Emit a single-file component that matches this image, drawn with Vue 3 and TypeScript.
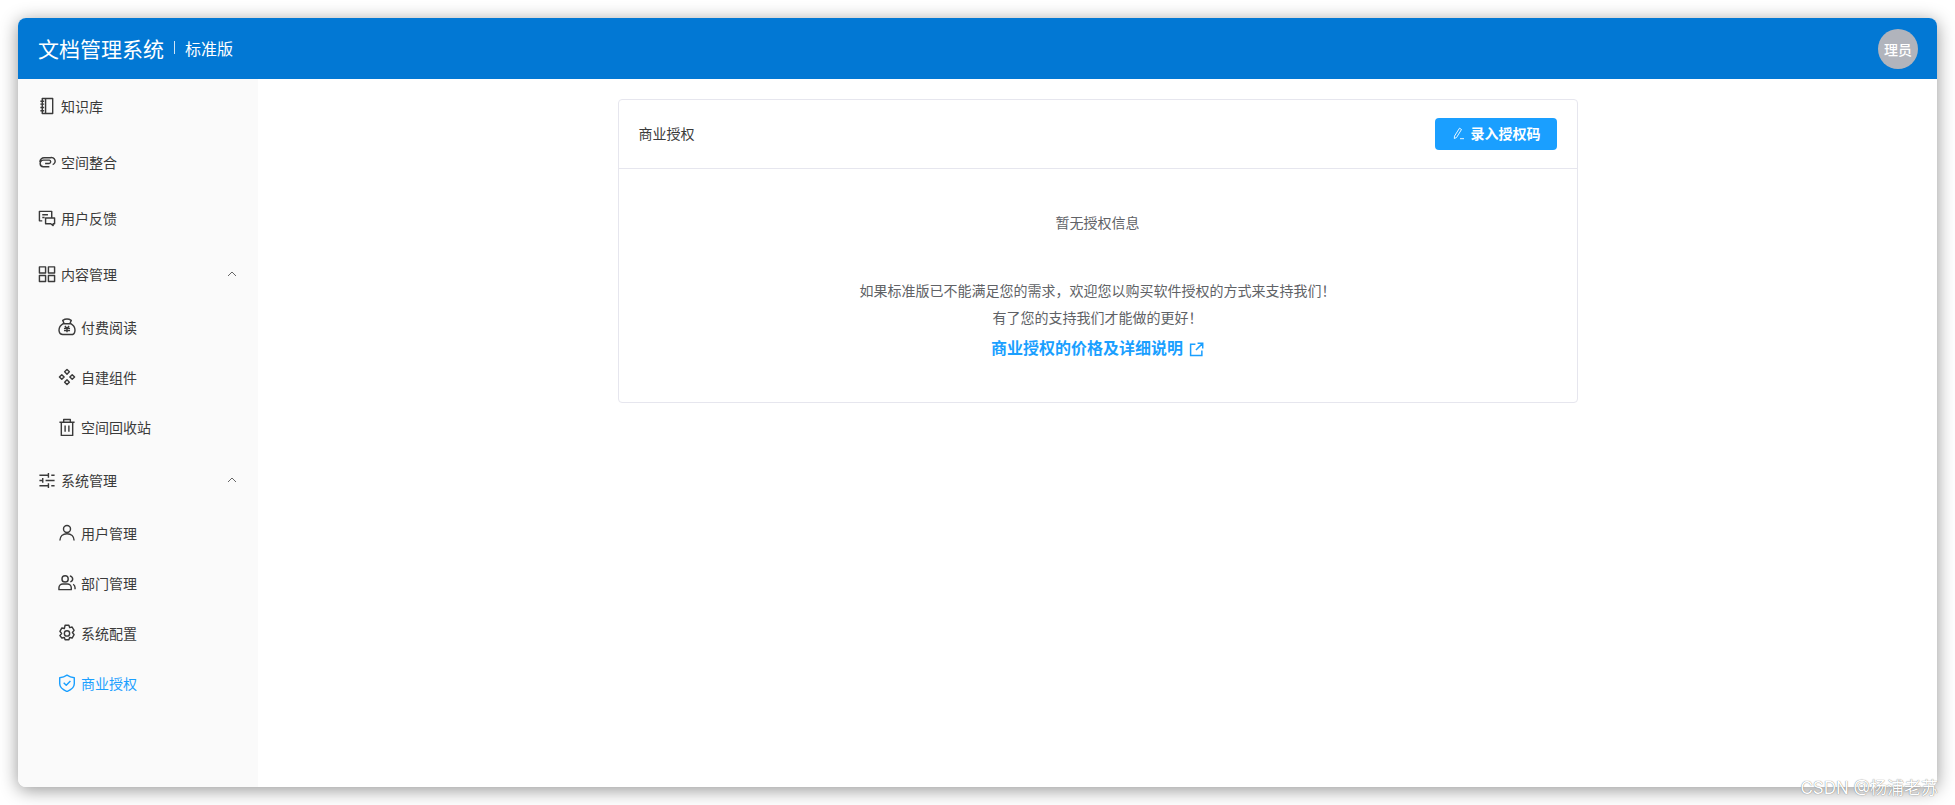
<script setup lang="ts">
interface MenuItem {
  label: string
  icon: string
  active?: boolean
}

interface MenuGroup {
  label: string
  icon: string
  children: MenuItem[]
}

const topItems: MenuItem[] = [
  { label: '知识库', icon: 'book' },
  { label: '空间整合', icon: 'link' },
  { label: '用户反馈', icon: 'chat' }
]

const groups: MenuGroup[] = [
  {
    label: '内容管理',
    icon: 'grid',
    children: [
      { label: '付费阅读', icon: 'bag' },
      { label: '自建组件', icon: 'parts' },
      { label: '空间回收站', icon: 'trash' }
    ]
  },
  {
    label: '系统管理',
    icon: 'sliders',
    children: [
      { label: '用户管理', icon: 'user' },
      { label: '部门管理', icon: 'users' },
      { label: '系统配置', icon: 'gear' },
      { label: '商业授权', icon: 'shield', active: true }
    ]
  }
]

const icons: Record<string, string> = {
  book: 'M4.500 1.500h11v16h-11zM8 1.500v16M2.500 4.500h4M2.500 7.500h4M2.500 11h4M2.500 14.500h4',
  link: 'M2 9.500A4.500 4.500 0 0 1 6.500 5H13a3.800 3.800 0 0 1 2.500 7.200M12 14.500H6a3.500 3.500 0 0 1-.5-7H12a1.800 1.800 0 0 1 0 3.500H7.500',
  chat: 'M14.500 9.500V2.500H1.500v10h3M4.500 6h6M4.500 9h2.500M8 9.500h9.500v6H16v2l-2.500-2H8z',
  grid: 'M1.500 2h6.500v6.500H1.500zM11 2h6.500v6.500H11zM1.500 11h6.500v6.500H1.500zM11 11h6.500v6.500H11z',
  bag: 'M6.500 6 5 2.500c2.500-1.500 6.500-1.500 9 0L12.500 6M5.500 6h8c3 1.800 4.800 5 4.300 8-.3 2-1.800 3.500-3.800 3.500H5c-2 0-3.500-1.500-3.800-3.500-.5-3 1.300-6.200 4.300-8zM7.300 8.500l2.200 2.500 2.200-2.500M6.300 11h6.400M6.300 13.300h6.400M9.500 11v4',
  parts: 'M9.500 1.500 12 4 9.500 6.500 7 4zM9.500 12.500 12 15l-2.500 2.500L7 15zM4 7l2.500 2.500L4 12 1.500 9.500zM15 7l2.500 2.500L15 12l-2.500-2.500z',
  trash: 'M1.500 4.500h16M6 4.500V1.500h7v3M3.500 4.500v14h12v-14M7.500 8v6.500M11.500 8v6.500',
  sliders: 'M1.500 4.500h9M14 4.500h3.500M11 2v5M1.500 10h3M8 10h9.500M5 7.500v5M1.500 15.500h9M14 15.500h3.500M11 13v5',
  user: 'M9.500 9a3.700 3.700 0 1 0 0-7.400 3.700 3.700 0 0 0 0 7.400zM2 17.500c0-4.500 3.200-7.200 7.500-7.200s7.500 2.700 7.500 7.200',
  users: 'M7.500 8.500a3.300 3.300 0 1 0 0-6.600 3.300 3.300 0 0 0 0 6.600zM1 16.500v-2c0-2.500 2-4 4-4h5c2 0 4 1.500 4 4v2zM12.500 2c2 .5 3 1.800 3 3.300 0 1.400-1 2.600-2.500 3M16 10.800c1.300.8 2 2 2 3.700v1.500',
  gear: 'M7.500 1.300h4l.8 2.500 2.600-.6 2.100 3.500-1.800 2.300 1.800 2.300-2.100 3.500-2.600-.6-.8 2.500h-4l-.8-2.500-2.600.6L2 12.300 3.800 10 2 7.700l2.100-3.500 2.600.6zM9.500 12.800a2.800 2.800 0 1 0 0-5.600 2.800 2.800 0 0 0 0 5.600z',
  shield: 'M9.500 1.200c2.200 1.600 4.900 2.500 7.700 2.700v6.300c0 3.600-3.200 6.300-7.700 8.300-4.500-2-7.700-4.700-7.700-8.300V3.900c2.800-.2 5.500-1.100 7.700-2.700zM6 9.300l2.700 2.700 4.400-4.500'
}
</script>

<template>
  <div class="page">
    <div class="window">
      <header class="topbar">
        <div class="brand">
          <span class="brand-name">文档管理系统</span>
          <i class="brand-sep"></i>
          <span class="brand-edition">标准版</span>
        </div>
        <div class="avatar">理员</div>
      </header>

      <div class="body">
        <aside class="sidebar">
          <a v-for="item in topItems" :key="item.label" class="menu-row top-row">
            <svg class="icon" viewBox="0 0 19 19"><path :d="icons[item.icon]" /></svg>
            <span>{{ item.label }}</span>
          </a>

          <section v-for="group in groups" :key="group.label" class="group">
            <a class="menu-row group-row">
              <svg class="icon" viewBox="0 0 19 19"><path :d="icons[group.icon]" /></svg>
              <span>{{ group.label }}</span>
              <svg class="caret" viewBox="0 0 10 6"><path d="M1 5l4-4 4 4" /></svg>
            </a>
            <a
              v-for="child in group.children"
              :key="child.label"
              class="menu-row child-row"
              :class="{ active: child.active }"
            >
              <svg class="icon" viewBox="0 0 19 19"><path :d="icons[child.icon]" /></svg>
              <span>{{ child.label }}</span>
            </a>
          </section>
        </aside>

        <main class="content">
          <section class="card">
            <div class="card-head">
              <span class="card-title">商业授权</span>
              <button class="primary" type="button">
                <svg class="pen" viewBox="0 0 13 13">
                  <path d="M7.500 1.200l2 1.300-5 8-2.200 1 .2-2.400zM8 11.700h4" />
                </svg>
                录入授权码
              </button>
            </div>
            <div class="card-body">
              <p class="empty">暂无授权信息</p>
              <p class="pitch">如果标准版已不能满足您的需求，欢迎您以购买软件授权的方式来支持我们！</p>
              <p class="pitch">有了您的支持我们才能做的更好！</p>
              <a class="details">
                商业授权的价格及详细说明
                <svg viewBox="0 0 14 14">
                  <path d="M6 2H1.500v10.500H12V8M8 1.200h4.800V6M12.500 1.500 6.500 7.500" />
                </svg>
              </a>
            </div>
          </section>
        </main>
      </div>
    </div>
    <div class="watermark">CSDN @杨浦老苏</div>
  </div>
</template>

<style>
html,
body {
  margin: 0;
  background: #fff;
  overflow: hidden;
}
</style>

<style scoped>
.page {
  position: relative;
  width: 1955px;
  height: 805px;
  padding: 18px;
  box-sizing: border-box;
  overflow: hidden;
  font-family: Inter, "Noto Sans CJK SC", sans-serif;
  font-size: 14px;
  color: #333;
}

.window {
  display: flex;
  flex-direction: column;
  width: 1919px;
  height: 769px;
  border-radius: 8px;
  overflow: hidden;
  background: #fff;
  box-shadow: 0 3px 18px rgba(0, 0, 0, 0.42);
}

.topbar {
  display: flex;
  flex: none;
  align-items: center;
  justify-content: space-between;
  height: 61px;
  padding: 0 19px 0 20px;
  background: #0278d4;
  color: #fff;
}

.brand {
  display: flex;
  align-items: center;
  padding-bottom: 2px;
}

.brand-name {
  font-size: 21px;
}

.brand-sep {
  width: 1px;
  height: 13px;
  margin: 0 10px;
  background: #cfe4f6;
}

.brand-edition {
  font-size: 16px;
}

.avatar {
  display: flex;
  align-items: center;
  justify-content: center;
  width: 40px;
  height: 40px;
  border-radius: 50%;
  background: #b1b4bc;
  font-size: 14px;
  font-weight: 500;
}

.body {
  display: flex;
  flex: 1;
  min-height: 0;
}

.sidebar {
  flex: none;
  width: 240px;
  background: #fafafa;
}

.menu-row {
  display: flex;
  align-items: center;
  gap: 5px;
  padding-bottom: 2px;
  box-sizing: border-box;
  color: #3a3a3a;
}

.top-row,
.group-row {
  height: 56px;
  padding-left: 20px;
}

.child-row {
  height: 50px;
  padding-left: 40px;
}

.child-row.active {
  color: #1a9fff;
}

.icon {
  flex: none;
  width: 18px;
  height: 18px;
  fill: none;
  stroke: currentColor;
  stroke-width: 1.500;
  stroke-linejoin: round;
}

.caret {
  width: 10px;
  height: 6px;
  margin-left: auto;
  margin-right: 21px;
  fill: none;
  stroke: #666;
  stroke-width: 1;
}

.content {
  display: flex;
  flex: 1;
  justify-content: center;
  padding-top: 20px;
  background: #fff;
}

.card {
  width: 960px;
  height: 304px;
  box-sizing: border-box;
  border: 1px solid #e6e6ee;
  border-radius: 4px;
}

.card-head {
  display: flex;
  align-items: center;
  justify-content: space-between;
  height: 68px;
  padding: 0 20px;
  border-bottom: 1px solid #e6e6ee;
  color: #3a3a3a;
}

.card-title {
  padding-bottom: 2px;
}

.primary {
  display: flex;
  align-items: center;
  justify-content: center;
  gap: 6px;
  width: 122px;
  height: 32px;
  padding: 0 0 2px 1px;
  border: 0;
  border-radius: 4px;
  background: #1a9fff;
  color: #fff;
  font: inherit;
  font-weight: 600;
}

.pen {
  width: 13px;
  height: 13px;
  fill: none;
  stroke: #fff;
  stroke-width: 0.900;
}

.card-body {
  display: flex;
  flex-direction: column;
  align-items: center;
  color: #606266;
}

.card-body p {
  margin: 0;
}

.card-body .empty {
  margin-top: 43px;
  line-height: 22px;
}

.card-body .pitch {
  line-height: 27px;
}

.card-body .empty + .pitch {
  margin-top: 43px;
}

.details {
  display: flex;
  align-items: center;
  gap: 6px;
  margin-top: 2px;
  color: #1a9fff;
  font-size: 16px;
  font-weight: 600;
  line-height: 30px;
}

.details svg {
  width: 15px;
  height: 15px;
  margin-top: 3px;
  fill: none;
  stroke: currentColor;
  stroke-width: 1.400;
}

.watermark {
  position: absolute;
  right: 17px;
  top: 777px;
  color: #fff;
  font-size: 17px;
  line-height: 22px;
  text-shadow: 0 0 1px #555;
  white-space: nowrap;
}
</style>
